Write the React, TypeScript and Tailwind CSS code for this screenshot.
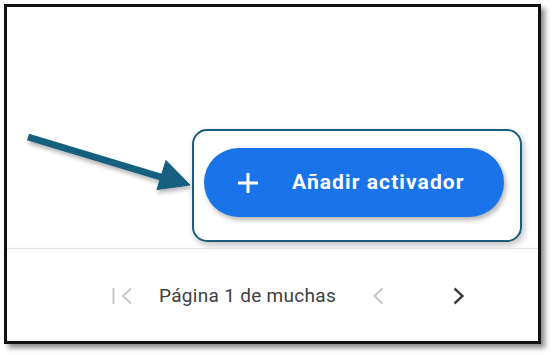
import React from "react";

export default function App() {
  return (
    <div className="relative w-[553px] h-[355px] bg-white pt-[4px] pl-[4px]" style={{ fontFamily: "Roboto, 'Liberation Sans', sans-serif" }}>
      <div className="w-[537px] h-[340px] border-[3px] border-[#111] bg-white shadow-[4px_4px_5px_rgba(0,0,0,0.45)] flex flex-col">
        <div className="h-[241px] pt-[122px] pl-[185px]">
          <div className="w-[330px] h-[113px] rounded-[15px] border-[2.5px] border-[#1b5d7c] shadow-[2px_3px_6px_rgba(0,0,0,0.25)] pt-[17px] pl-[10px]">
            <div className="w-[300px] h-[69px] rounded-full bg-[#1a73e8] shadow-[2px_3px_5px_rgba(0,0,0,0.3)] flex items-center pl-[33px]">
              <svg width="22" height="22" viewBox="0 0 22 22" className="shrink-0">
                <path d="M11 1v20M1 11h20" stroke="white" strokeWidth="3" fill="none" />
              </svg>
              <span className="ml-[33px] text-[21px] font-bold text-white tracking-[1.1px] whitespace-nowrap">Añadir activador</span>
            </div>
          </div>
        </div>
        <div className="h-px bg-[#e3e3e6] shadow-[0_-2px_3px_rgba(0,0,0,0.05)]" />
        <div className="flex-1 flex items-center pl-[105px] pt-[2px]">
          <svg width="21" height="18" viewBox="0 0 21 18" className="shrink-0">
            <path d="M1.5 1v16" stroke="#c4c7cc" strokeWidth="2" fill="none" />
            <path d="M19 1.5L11 9l8 7.5" stroke="#c4c7cc" strokeWidth="2" fill="none" />
          </svg>
          <span className="ml-[26px] w-[178px] text-[19px] tracking-[0.3px] text-[#3c4043] whitespace-nowrap">Página 1 de muchas</span>
          <svg width="12" height="18" viewBox="0 0 12 18" className="ml-[35px] shrink-0">
            <path d="M10.5 1.5L2.5 9l8 7.5" stroke="#c4c7cc" strokeWidth="2" fill="none" />
          </svg>
          <svg width="12" height="18" viewBox="0 0 12 18" className="ml-[69px] shrink-0">
            <path d="M1.5 1.5L9.5 9l-8 7.5" stroke="#3c4043" strokeWidth="2.4" fill="none" />
          </svg>
        </div>
      </div>
      <svg className="absolute left-0 top-0 pointer-events-none" width="553" height="355" viewBox="0 0 553 355">
        <defs>
          <filter id="sh" x="-20%" y="-20%" width="140%" height="160%">
            <feDropShadow dx="1" dy="3" stdDeviation="2" floodColor="#000" floodOpacity="0.3" />
          </filter>
        </defs>
        <g filter="url(#sh)" fill="#175e7f" stroke="#175e7f">
          <path d="M28 137L164 178" strokeWidth="7" fill="none" />
          <path d="M190 185L157 189.5L166 160.5Z" strokeWidth="1" />
        </g>
      </svg>
    </div>
  );
}
